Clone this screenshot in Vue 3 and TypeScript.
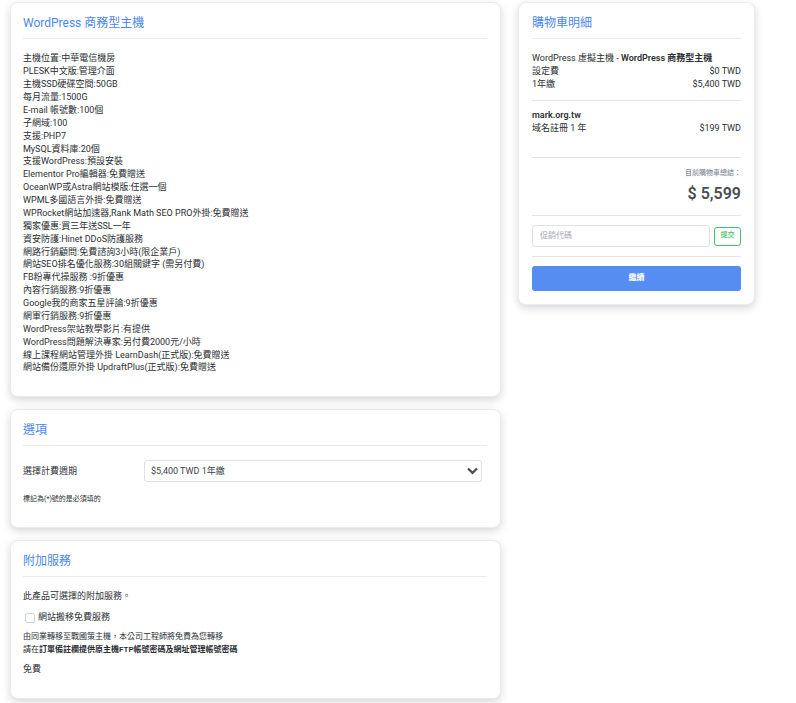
<script setup lang="ts">
import { ref } from 'vue'

const features: string[] = [
  '主機位置:中華電信機房',
  'PLESK中文版:管理介面',
  '主機SSD硬碟空間:50GB',
  '每月流量:1500G',
  'E-mail 帳號數:100個',
  '子網域:100',
  '支援:PHP7',
  'MySQL資料庫:20個',
  '支援WordPress:預設安裝',
  'Elementor Pro編輯器:免費贈送',
  'OceanWP或Astra網站模版:任選一個',
  'WPML多國語言外掛:免費贈送',
  'WPRocket網站加速器,Rank Math SEO PRO外掛:免費贈送',
  '獨家優惠:買三年送SSL一年',
  '資安防護:Hinet DDoS防護服務',
  '網路行銷顧問:免費諮詢3小時(限企業戶)',
  '網站SEO排名優化服務:30組關鍵字 (需另付費)',
  'FB粉專代操服務 :9折優惠',
  '內容行銷服務:9折優惠',
  'Google我的商家五星評論:9折優惠',
  '網軍行銷服務:9折優惠',
  'WordPress架站教學影片:有提供',
  'WordPress問題解決專家:另付費2000元/小時',
  '線上課程網站管理外掛 LearnDash(正式版):免費贈送',
  '網站備份還原外掛 UpdraftPlus(正式版):免費贈送',
]

const cycle = ref<string>('1y')
const migrate = ref<boolean>(false)
const promo = ref<string>('')
</script>

<template>
  <div class="page">
    <main class="column">
      <section class="card">
        <h2 class="title">WordPress 商務型主機</h2>
        <ul class="features">
          <li v-for="item in features" :key="item">{{ item }}</li>
        </ul>
      </section>

      <section class="card">
        <h2 class="title">選項</h2>
        <div class="field">
          <label for="cycle">選擇計費週期</label>
          <div class="select-wrap">
            <select id="cycle" v-model="cycle">
              <option value="1y">$5,400 TWD 1年繳</option>
            </select>
            <svg class="chevron" viewBox="0 0 11 8" aria-hidden="true">
              <path d="M1 1.5 L5.5 5.8 L10 1.5" fill="none" stroke="#495057" stroke-width="2.3" />
            </svg>
          </div>
        </div>
        <p class="note">標記為(*)號的是必須填的</p>
      </section>

      <section class="card">
        <h2 class="title">附加服務</h2>
        <p class="intro">此產品可選擇的附加服務。</p>
        <div class="check">
          <input id="migrate" v-model="migrate" type="checkbox" />
          <label for="migrate">網站搬移免費服務</label>
        </div>
        <p class="detail">
          由同業轉移至戰國策主機，本公司工程師將免費為您轉移<br />
          請在<strong>訂單備註欄提供原主機FTP帳號密碼及網址管理帳號密碼</strong>
        </p>
        <p class="price">免費</p>
      </section>
    </main>

    <aside class="card cart">
      <h2 class="title">購物車明細</h2>
      <div class="item first">
        <p>WordPress 虛擬主機 - <strong>WordPress 商務型主機</strong></p>
        <p class="row"><span>設定費</span><span>$0 TWD</span></p>
        <p class="row"><span>1年繳</span><span>$5,400 TWD</span></p>
      </div>
      <div class="item domain">
        <p><strong>mark.org.tw</strong></p>
        <p class="row"><span>域名註冊 1 年</span><span>$199 TWD</span></p>
      </div>
      <div class="total">
        <p class="total-label">目前購物車總結：</p>
        <p class="amount">$ 5,599</p>
      </div>
      <form class="promo" @submit.prevent>
        <input v-model="promo" type="text" placeholder="促銷代碼" aria-label="促銷代碼" />
        <button type="submit">提交</button>
      </form>
      <div class="action">
        <button type="button">繼續</button>
      </div>
    </aside>
  </div>
</template>

<style>
body {
  background: #fff;
}
</style>

<style scoped>
.page,
.page * {
  box-sizing: border-box;
}

.page {
  display: grid;
  grid-template-columns: minmax(0, 491fr) minmax(0, 237fr);
  gap: 17px;
  align-items: start;
  padding: 2px 41px 4px 10px;
  font-family: Roboto, "Noto Sans CJK TC", sans-serif;
  font-size: 9px;
  line-height: 13px;
  color: #2c3034;
}

.column {
  display: grid;
  gap: 12px;
}

.card {
  padding: 0 13px;
  background: #fff;
  border: 1px solid #e9ebf0;
  border-radius: 8px;
  box-shadow: 0 3px 8px rgba(0, 0, 0, 0.16);
}

.column .card {
  padding-left: 12px;
}

.title {
  margin: 0;
  padding: 12px 0 7px;
  border-bottom: 1px solid #e9ebed;
  font-size: 12px;
  line-height: 16px;
  font-weight: 400;
  color: #4b87f0;
}

p {
  margin: 0;
}

strong {
  font-weight: 600;
}

.features {
  display: grid;
  grid-auto-rows: 13px 13px 13px 13px 13px 13px 13px 12px;
  margin: 0;
  padding: 13px 0 22px;
  list-style: none;
}

.field {
  display: grid;
  grid-template-columns: 121px minmax(0, 1fr);
  align-items: center;
  padding: 14px 5px 0 0;
}

.select-wrap {
  position: relative;
}

select {
  display: block;
  width: 100%;
  height: 22px;
  padding: 0 24px 0 6px;
  appearance: none;
  background: #fff;
  border: 1px solid #dee2e6;
  border-radius: 3px;
  font: inherit;
  color: #3c4248;
}

.chevron {
  position: absolute;
  top: 7px;
  right: 4px;
  width: 11px;
  height: 8px;
  pointer-events: none;
}

.note {
  padding: 11px 0 21px;
  font-size: 7px;
}

.intro {
  padding-top: 13px;
}

.check {
  display: flex;
  align-items: center;
  gap: 3px;
  padding: 8px 0 6px 2px;
}

.check input {
  width: 10px;
  height: 10px;
  margin: 0;
  appearance: none;
  background: #fff;
  border: 1px solid #ced4da;
  border-radius: 2px;
}

.check input:checked {
  background: #4b87f0;
}

.detail {
  font-size: 8px;
}

.price {
  padding: 7px 0 22px;
}

.first {
  padding: 13px 0 9px;
  border-bottom: 1px solid #e2e4e6;
}

.domain {
  padding: 8px 0 22px;
  border-bottom: 1px solid #e2e4e6;
}

.row {
  display: flex;
  justify-content: space-between;
}

.total {
  padding: 9px 0 11px;
  border-bottom: 1px solid #e2e4e6;
  text-align: right;
}

.total-label {
  font-size: 7px;
  font-weight: 500;
  color: #8a8d9b;
}

.amount {
  padding-top: 3px;
  font-size: 16px;
  line-height: 21px;
  font-weight: 600;
  color: #4a4d50;
}

.promo {
  display: flex;
  align-items: center;
  gap: 4px;
  padding: 9px 0;
  border-bottom: 1px solid #e2e4e6;
}

.promo input {
  flex: 1;
  min-width: 0;
  height: 22px;
  padding: 0 7px 2px;
  border: 1px solid #dee2e6;
  border-radius: 3px;
  font: inherit;
  font-size: 8px;
  color: #3c4248;
}

.promo input::placeholder {
  color: #a5a6b5;
  opacity: 1;
}

.promo button {
  width: 27px;
  height: 19px;
  padding: 0 0 1px;
  background: #fff;
  border: 1px solid #3fc56d;
  border-radius: 3px;
  font: inherit;
  font-size: 7px;
  font-weight: 500;
  color: #3fc56d;
}

.action {
  padding: 9px 0 13px;
}

.action button {
  display: block;
  width: 100%;
  height: 25px;
  padding: 0 0 3px;
  background: #568df0;
  border: 0;
  border-radius: 3px;
  font: inherit;
  font-size: 8px;
  font-weight: 700;
  color: #fff;
}
</style>
